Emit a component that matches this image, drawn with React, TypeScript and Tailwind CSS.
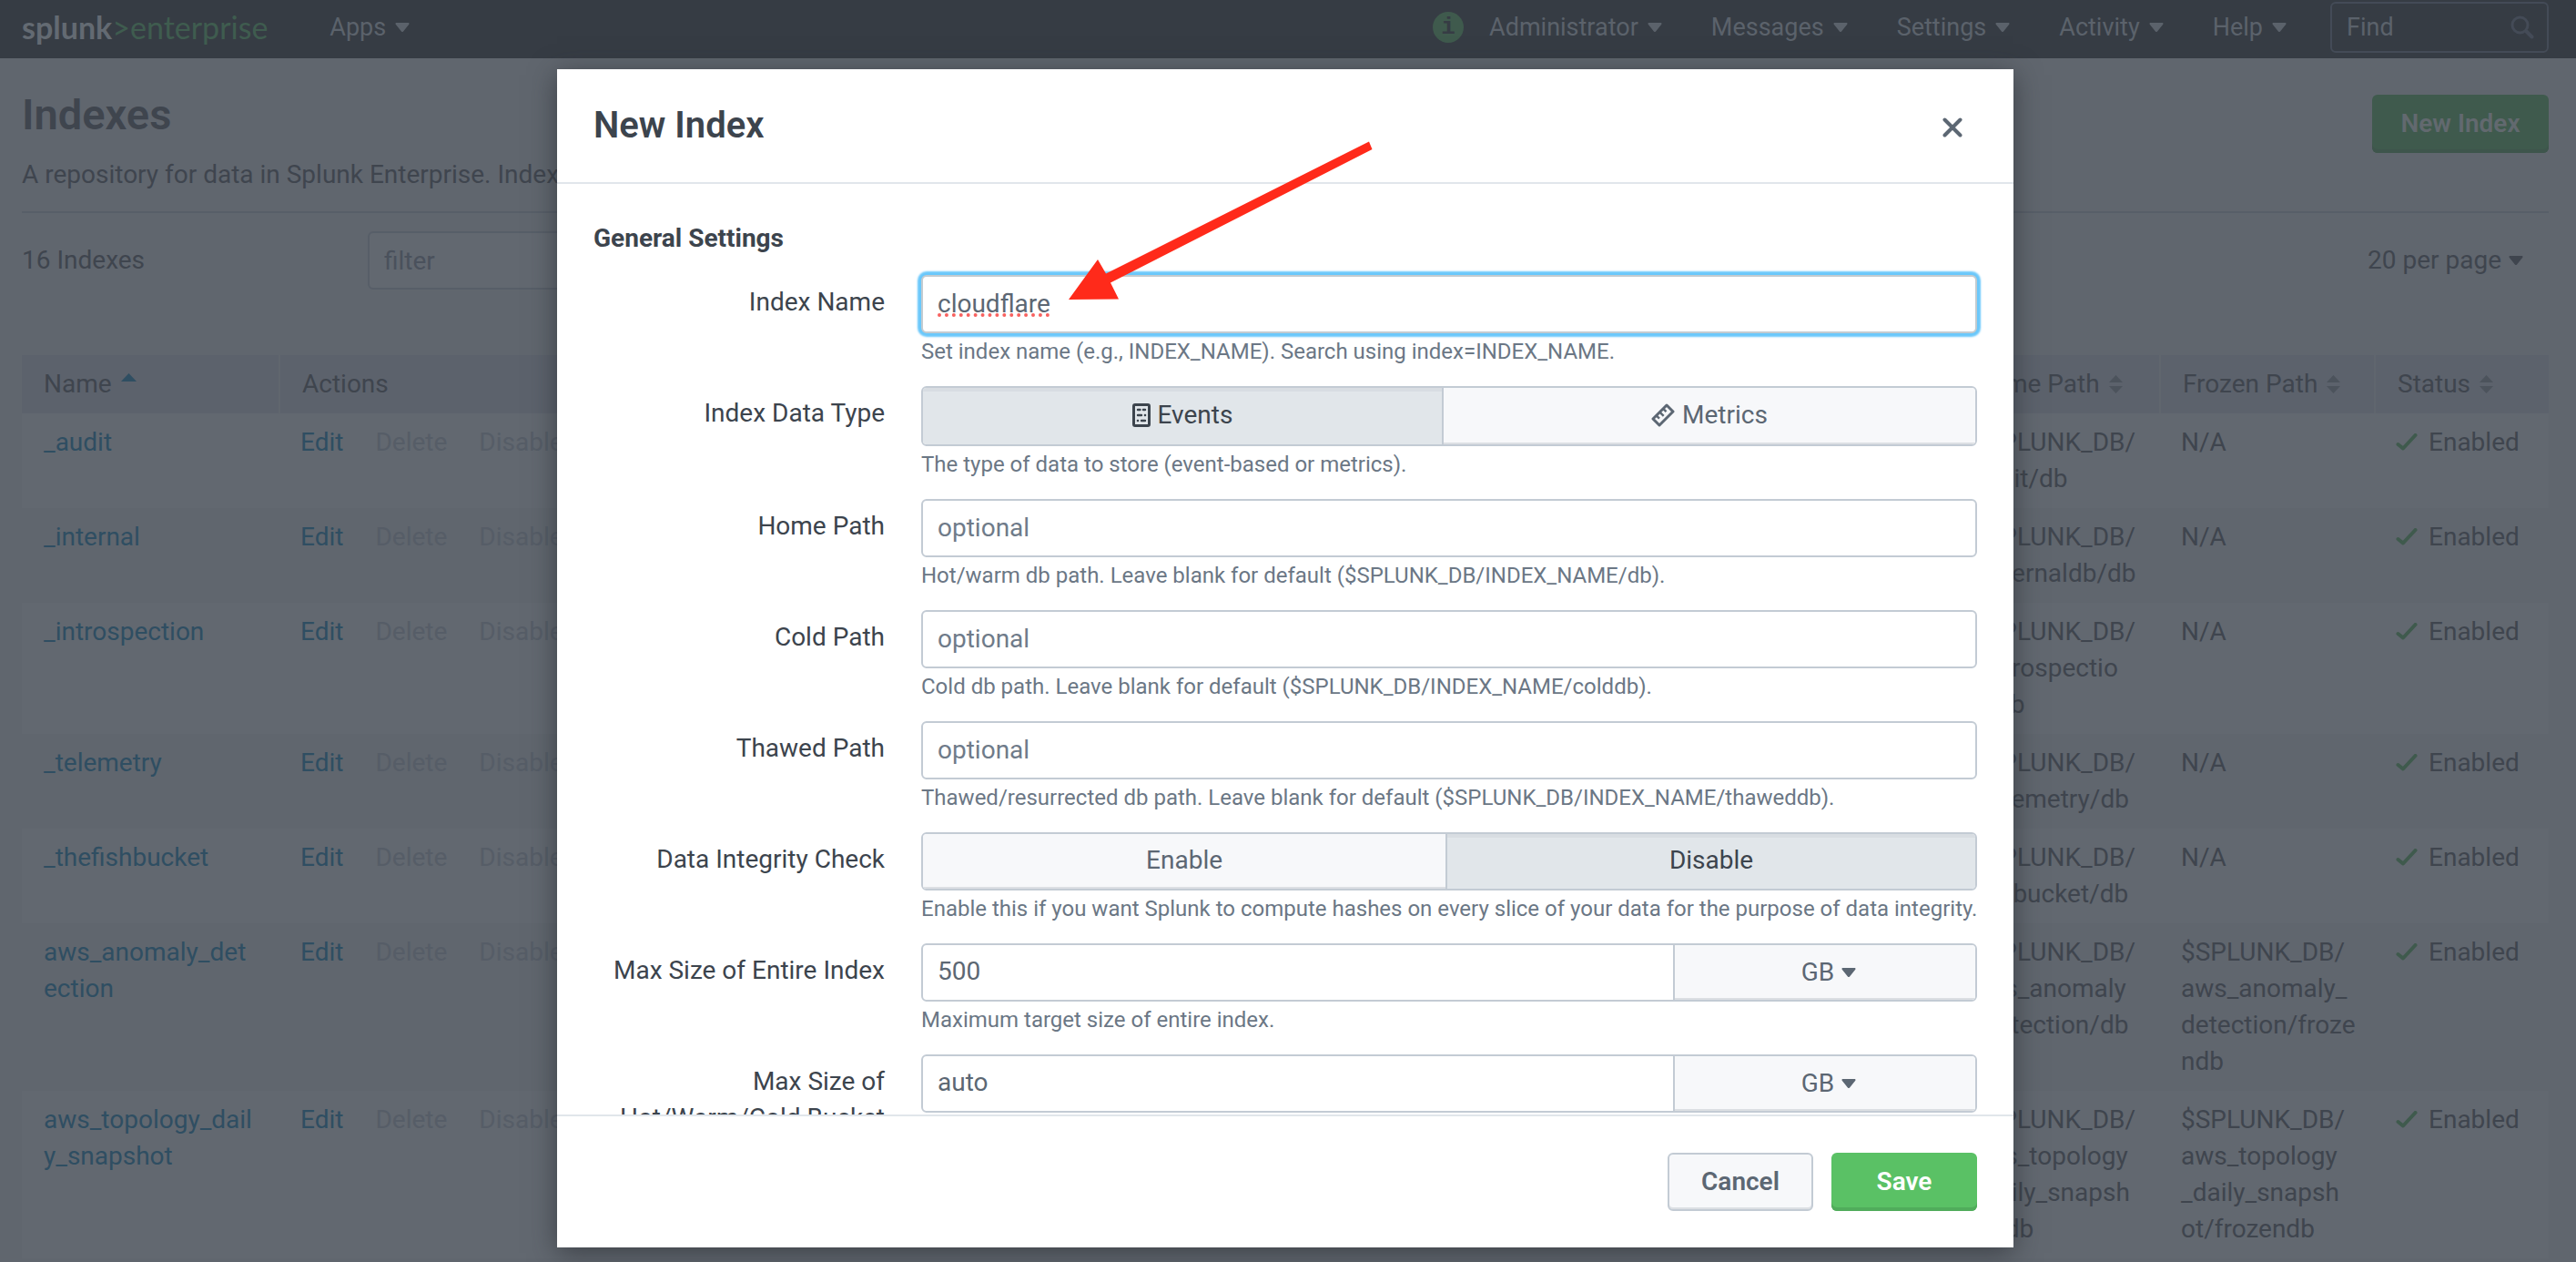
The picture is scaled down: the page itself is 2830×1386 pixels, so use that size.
import type { ReactNode } from "react";

const navItems = ["Administrator", "Messages", "Settings", "Activity", "Help"];

type IndexRow = { name: string[]; home: string[]; frozen: string[] };

const rows: IndexRow[] = [
  { name: ["_audit"], home: ["$SPLUNK_DB/", "audit/db"], frozen: ["N/A"] },
  { name: ["_internal"], home: ["$SPLUNK_DB/", "_internaldb/db"], frozen: ["N/A"] },
  { name: ["_introspection"], home: ["$SPLUNK_DB/", "_introspectio", "n/db"], frozen: ["N/A"] },
  { name: ["_telemetry"], home: ["$SPLUNK_DB/", "_telemetry/db"], frozen: ["N/A"] },
  { name: ["_thefishbucket"], home: ["$SPLUNK_DB/", "fishbucket/db"], frozen: ["N/A"] },
  {
    name: ["aws_anomaly_det", "ection"],
    home: ["$SPLUNK_DB/", "aws_anomaly", "_detection/db"],
    frozen: ["$SPLUNK_DB/", "aws_anomaly_", "detection/froze", "ndb"],
  },
  {
    name: ["aws_topology_dail", "y_snapshot"],
    home: ["$SPLUNK_DB/", "aws_topology", "_daily_snapsh", "ot/db"],
    frozen: ["$SPLUNK_DB/", "aws_topology", "_daily_snapsh", "ot/frozendb"],
  },
];

function Caret() {
  return (
    <svg width="16" height="10" viewBox="0 0 16 10" fill="currentColor" aria-hidden="true">
      <path d="M1.6 0h12.8c1 0 1.5 1 .9 1.8L9.300 9.200a1.600 1.600 0 0 1-2.600 0L.7 1.800C.1 1 .6 0 1.600 0Z" />
    </svg>
  );
}

function SortIcon() {
  return (
    <svg width="15" height="20" viewBox="0 0 15 20" fill="#4c535c" aria-hidden="true">
      <path d="M7.500 0 15 8H0Z" />
      <path d="M0 12h15l-7.500 8Z" />
    </svg>
  );
}

function CheckIcon() {
  return (
    <svg width="24" height="20" viewBox="0 0 24 20" fill="none" stroke="#3f5a4d" strokeWidth="4" strokeLinecap="round" strokeLinejoin="round" aria-hidden="true">
      <path d="M2.500 12 8 16.500 21.500 2" />
    </svg>
  );
}

function EventsIcon() {
  return (
    <svg width="20" height="26" viewBox="0 0 20 26" fill="none" stroke="currentColor" strokeWidth="3" strokeLinecap="round" aria-hidden="true">
      <rect x="1.500" y="1.500" width="17" height="23" rx="1.500" />
      <g strokeWidth="2.400">
        <path d="M6 7h2.500M12 7h2" />
        <path d="M6 13h4M13.900 13h.2" />
        <path d="M5.900 19h.2M10 19h4" />
      </g>
    </svg>
  );
}

function MetricsIcon() {
  return (
    <svg width="26" height="26" viewBox="0 0 26 26" fill="none" stroke="currentColor" strokeWidth="3" strokeLinejoin="round" aria-hidden="true">
      <path d="M17 2 24 9 9 24 2 17Z" />
      <path d="m5.700 13.300 3.300 3.300M9.400 9.600l4.300 4.300M13.200 5.800l3.300 3.300" strokeWidth="2.400" />
    </svg>
  );
}

function TopBar() {
  return (
    <header className="flex h-16 shrink-0 items-start bg-[#363c44] pt-0.5 pr-[30px] pl-6 text-[27px] text-[#5b626b]">
      <div className="flex h-14 w-full items-center">
        <a href="#home" className="font-[Lato,sans-serif] text-[34px] leading-none text-[#3f5c4f]">
          <span className="font-bold text-[#636a72]">splunk</span>&gt;enterprise
        </a>
        <button type="button" className="ml-[68px] flex items-center gap-2.5">
          Apps <Caret />
        </button>
        <div className="ml-auto flex items-center">
          <span className="mr-7 flex size-[34px] items-center justify-center rounded-full bg-[#3f5a4d] font-[Liberation_Mono,monospace] text-[26px] font-bold text-[#363c44]">
            i
          </span>
          <nav className="mr-12 flex items-center gap-[54px]">
            {navItems.map((item) => (
              <button key={item} type="button" className="flex items-center gap-2.5">
                {item} <Caret />
              </button>
            ))}
          </nav>
          <label className="flex h-14 w-60 items-center rounded-md border-2 border-[#444b57] pr-3.5 pl-4">
            <input
              aria-label="Find"
              placeholder="Find"
              className="min-w-0 flex-1 bg-transparent outline-none placeholder:text-[#5b626b]"
            />
            <svg width="26" height="26" viewBox="0 0 26 26" fill="none" stroke="#444b57" strokeLinecap="round" aria-hidden="true">
              <circle cx="10.500" cy="10.500" r="8.500" strokeWidth="3" />
              <path d="m17.500 17.500 6 6" strokeWidth="4" />
            </svg>
          </label>
        </div>
      </div>
    </header>
  );
}

function Lines({ lines }: { lines: string[] }) {
  return (
    <>
      {lines.map((line) => (
        <span key={line} className="block whitespace-nowrap">
          {line}
        </span>
      ))}
    </>
  );
}

function IndexesPage() {
  return (
    <main className="min-h-0 flex-1 overflow-hidden pt-[34px] pr-[30px] pl-6">
      <div className="flex items-start justify-between border-b-2 border-[#575e68] pb-5">
        <div>
          <h1 className="text-[47px] leading-14 font-semibold">Indexes</h1>
          <p className="mt-[18px] leading-10">
            A repository for data in Splunk Enterprise. Indexes reside in flat files on the indexer.
          </p>
        </div>
        <button
          type="button"
          className="mt-1.5 h-16 w-[194px] rounded-md bg-[#3f5a4d] font-semibold text-[#62696f] shadow-[inset_0_-4px_0_#3e554c]"
        >
          New Index
        </button>
      </div>
      <div className="mt-5 mb-[72px] flex items-center">
        <span className="w-[380px]">16 Indexes</span>
        <input
          aria-label="Filter indexes"
          placeholder="filter"
          className="h-16 w-[460px] rounded-md border-2 border-[#575e68] bg-[#626870] px-4 outline-none placeholder:text-[#4a515c]"
        />
        <button type="button" className="mr-7 ml-auto flex items-center gap-2">
          20 per page <Caret />
        </button>
      </div>
      <table className="w-full table-fixed border-collapse text-left">
        <colgroup>
          <col className="w-[283px]" />
          <col />
          <col className="w-[231px]" />
          <col className="w-[236px]" />
          <col className="w-[191px]" />
        </colgroup>
        <thead>
          <tr className="h-16 bg-[#5c626c]">
            <th className="border-r-2 border-[#60666e] pl-6 font-normal">
              <span className="flex items-center gap-2.5">
                Name
                <svg width="17" height="9" viewBox="0 0 17 9" fill="#2f4e62" className="mb-4" aria-hidden="true">
                  <path d="M8.500 0 17 9H0Z" />
                </svg>
              </span>
            </th>
            <th className="border-r-2 border-[#60666e] pl-6 font-normal">Actions</th>
            <th className="border-r-2 border-[#60666e] pl-6 font-normal">
              <span className="flex items-center gap-2.5 whitespace-nowrap">
                Home Path <SortIcon />
              </span>
            </th>
            <th className="border-r-2 border-[#60666e] pl-6 font-normal">
              <span className="flex items-center gap-2.5 whitespace-nowrap">
                Frozen Path <SortIcon />
              </span>
            </th>
            <th className="pl-6 font-normal">
              <span className="flex items-center gap-2.5">
                Status <SortIcon />
              </span>
            </th>
          </tr>
        </thead>
        <tbody>
          {rows.map((row) => (
            <tr key={row.name[0]} className="align-top leading-10 odd:bg-[#626870]">
              <td className="py-3 pl-6">
                <a href={"#" + row.name[0]} className="text-[#2f4e62]">
                  <Lines lines={row.name} />
                </a>
              </td>
              <td className="py-3 pl-[23px]">
                <div className="flex gap-[35px]">
                  <button type="button" className="text-[#2f4e62]">
                    Edit
                  </button>
                  <button type="button" disabled className="text-[#565d67]">
                    Delete
                  </button>
                  <button type="button" disabled className="text-[#565d67]">
                    Disable
                  </button>
                </div>
              </td>
              <td className="py-3 pl-6">
                <Lines lines={row.home} />
              </td>
              <td className="py-3 pl-[23px]">
                <Lines lines={row.frozen} />
              </td>
              <td className="py-3 pl-[23px]">
                <span className="flex items-center gap-3">
                  <CheckIcon /> Enabled
                </span>
              </td>
            </tr>
          ))}
        </tbody>
      </table>
    </main>
  );
}

const inputClass =
  "block h-16 w-full min-w-0 rounded-md border-2 border-[#c3cbd4] bg-white px-4 pb-0.5 text-[#5c6773] outline-none placeholder:text-[#6f7b89]";

function Field({ id, label, help, children }: { id: string; label: string; help: string; children: ReactNode }) {
  return (
    <div className="mb-[22px] grid grid-cols-[320px_minmax(0,1fr)] gap-x-10">
      <label htmlFor={id} id={id + "-label"} className="pt-2.5 text-right leading-10">
        {label}
      </label>
      <div>
        {children}
        <p className="mt-1 text-[24px] leading-8 whitespace-nowrap text-[#6b7785]">{help}</p>
      </div>
    </div>
  );
}

const idleOption = "bg-[#f7f8fa] pb-0.5 text-[#5c6773] shadow-[inset_0_-2px_0_#dcdfe3]";
const pickedOption = "bg-[#e1e6ea] pb-0.5 text-[#3c444d] shadow-[inset_0_4px_0_#d8dde2]";

function SizeField({ id, label, value, help }: { id: string; label: string; value: string; help: string }) {
  return (
    <Field id={id} label={label} help={help}>
      <div className="flex h-16 overflow-hidden rounded-md border-2 border-[#c3cbd4]">
        <input id={id} defaultValue={value} className="min-w-0 flex-1 px-4 pb-0.5 text-[#5c6773] outline-none" />
        <div className="relative w-[332px] border-l-2 border-[#c3cbd4]">
          <select
            aria-label={label + " unit"}
            className="size-full appearance-none bg-[#f7f8fa] pr-4 text-center text-[#5c6773] shadow-[inset_0_-2px_0_#dcdfe3] outline-none [text-align-last:center]"
          >
            <option>GB</option>
            <option>MB</option>
            <option>TB</option>
          </select>
          <span className="pointer-events-none absolute inset-y-0 left-1/2 flex items-center pl-[18px] text-[#5c6773]">
            <Caret />
          </span>
        </div>
      </div>
    </Field>
  );
}

function NewIndexDialog() {
  return (
    <div className="absolute inset-x-0 top-[76px] bottom-4 flex justify-center pr-1.5">
      <section
        role="dialog"
        aria-labelledby="dialog-title"
        className="relative flex w-[1600px] max-w-full flex-col bg-white text-[#3c444d] shadow-[0_6px_28px_rgba(35,38,44,0.6)]"
      >
        <div className="flex h-[126px] shrink-0 items-center justify-between border-b-2 border-[#e1e6eb] px-10">
          <h2 id="dialog-title" className="text-[40px] leading-12 font-semibold">
            New Index
          </h2>
          <button type="button" aria-label="Close" className="mr-4 pt-1 text-[#5c6773]">
            <svg width="22" height="22" viewBox="0 0 22 22" fill="none" stroke="currentColor" strokeWidth="4" strokeLinecap="round" aria-hidden="true">
              <path d="M2.500 2.500l17 17M19.500 2.500l-17 17" />
            </svg>
          </button>
        </div>
        <form className="min-h-0 flex-1 overflow-hidden px-10 pt-10">
          <h3 className="mb-5 leading-10 font-bold">General Settings</h3>
          <Field id="index-name" label="Index Name" help="Set index name (e.g., INDEX_NAME). Search using index=INDEX_NAME.">
            <input
              id="index-name"
              defaultValue="cloudflare"
              spellCheck={false}
              className="block h-16 w-full rounded-md border-2 border-[#c3cbd0] bg-white px-4 pb-0.5 text-[#5c6773] underline decoration-[#f8615f] decoration-dotted decoration-4 underline-offset-2 shadow-[0_0_2px_4px_#6ac8fb] outline-none"
            />
          </Field>
          <Field id="data-type" label="Index Data Type" help="The type of data to store (event-based or metrics).">
            <div role="group" aria-labelledby="data-type-label" className="flex h-[66px] overflow-hidden rounded-md border-2 border-[#c3cbd4]">
              <button id="data-type" type="button" aria-pressed="true" className={"flex flex-[40] items-center justify-center gap-2 " + pickedOption}>
                <EventsIcon /> Events
              </button>
              <button type="button" aria-pressed="false" className={"flex flex-[41] items-center justify-center gap-2 border-l-2 border-[#c3cbd4] " + idleOption}>
                <MetricsIcon /> Metrics
              </button>
            </div>
          </Field>
          <Field id="home-path" label="Home Path" help="Hot/warm db path. Leave blank for default ($SPLUNK_DB/INDEX_NAME/db).">
            <input id="home-path" placeholder="optional" className={inputClass} />
          </Field>
          <Field id="cold-path" label="Cold Path" help="Cold db path. Leave blank for default ($SPLUNK_DB/INDEX_NAME/colddb).">
            <input id="cold-path" placeholder="optional" className={inputClass} />
          </Field>
          <Field id="thawed-path" label="Thawed Path" help="Thawed/resurrected db path. Leave blank for default ($SPLUNK_DB/INDEX_NAME/thaweddb).">
            <input id="thawed-path" placeholder="optional" className={inputClass} />
          </Field>
          <Field
            id="integrity"
            label="Data Integrity Check"
            help="Enable this if you want Splunk to compute hashes on every slice of your data for the purpose of data integrity."
          >
            <div role="group" aria-labelledby="integrity-label" className="flex h-16 overflow-hidden rounded-md border-2 border-[#c3cbd4]">
              <button id="integrity" type="button" aria-pressed="false" className={"flex-[99] " + idleOption}>
                Enable
              </button>
              <button type="button" aria-pressed="true" className={"flex-[100] border-l-2 border-[#c3cbd4] " + pickedOption}>
                Disable
              </button>
            </div>
          </Field>
          <SizeField id="max-size" label="Max Size of Entire Index" value="500" help="Maximum target size of entire index." />
          <SizeField
            id="max-bucket"
            label="Max Size of Hot/Warm/Cold Bucket"
            value="auto"
            help="Maximum target size of buckets."
          />
        </form>
        <div className="flex shrink-0 justify-end gap-5 border-t-2 border-[#e1e6eb] p-10">
          <button
            type="button"
            className="h-16 w-40 rounded-md border-2 border-[#c3cbd4] bg-[#f7f8fa] font-semibold text-[#5c6773] shadow-[inset_0_-2px_0_#dcdfe3]"
          >
            Cancel
          </button>
          <button type="submit" className="h-16 w-40 rounded-md bg-[#5ac165] font-semibold text-white shadow-[inset_0_-4px_0_#50ac5b]">
            Save
          </button>
        </div>
        <svg
          width="340"
          height="184"
          viewBox="0 0 340 184"
          fill="#ff2a1a"
          className="pointer-events-none absolute top-[74px] left-[560px]"
          aria-hidden="true"
        >
          <path d="M2 179 34 135 43 150.500 332 5.500 335.500 14 48 160.500 57 178.500Z" />
        </svg>
      </section>
    </div>
  );
}

export default function App() {
  return (
    <div className="relative flex h-screen flex-col overflow-hidden bg-[#60666e] font-[Roboto,sans-serif] text-[28px] leading-10 text-[#3f454e]">
      <TopBar />
      <IndexesPage />
      <NewIndexDialog />
    </div>
  );
}
